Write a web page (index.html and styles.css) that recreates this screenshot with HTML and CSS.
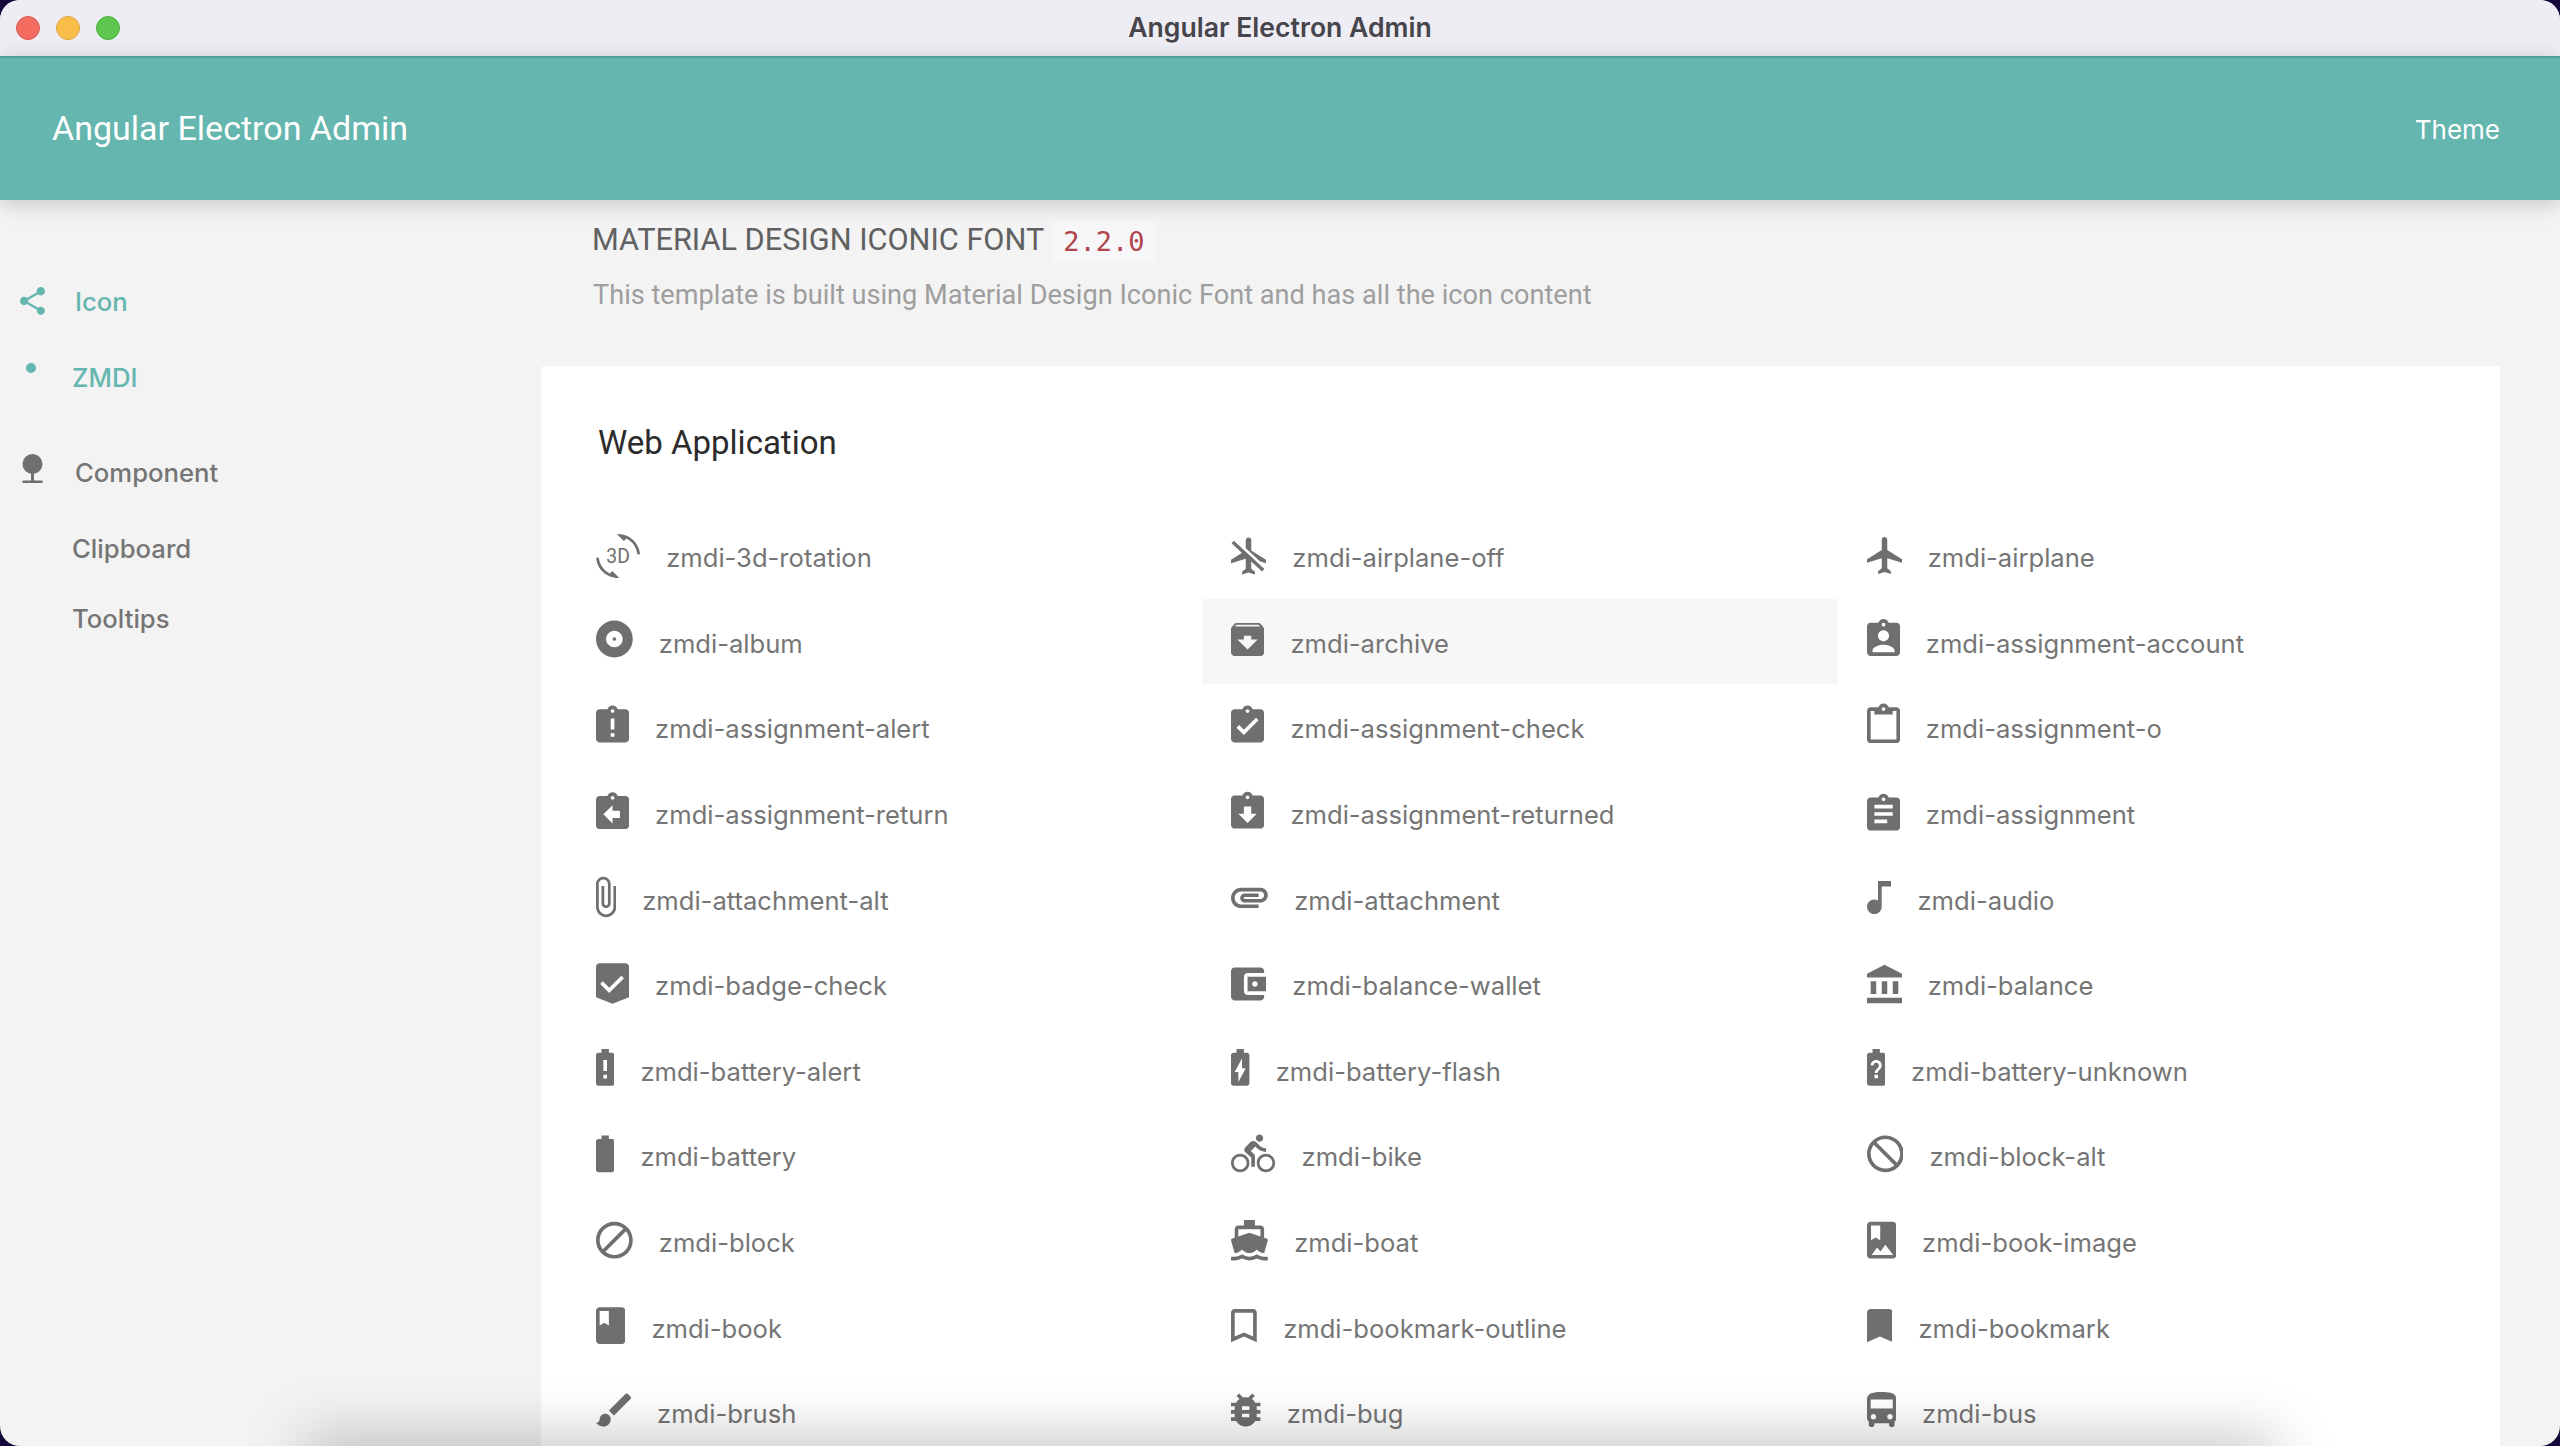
FILE: index.html
```html
<!DOCTYPE html>
<html lang="en">
<head>
    <meta charset="UTF-8">
    <title>Angular Electron Admin</title>
    <link rel="stylesheet" href="styles.css">
</head>
<body>
    <div class="window">
        <div class="titlebar">
            <div class="lights">
                <span class="light red"></span>
                <span class="light yellow"></span>
                <span class="light green"></span>
            </div>
            <div class="window-title">Angular Electron Admin</div>
        </div>

        <header class="topbar">
            <div class="brand">Angular Electron Admin</div>
            <div class="theme">Theme</div>
        </header>

        <div class="layout">
            <nav class="sidebar">
                <div class="nav-item active">
                    <svg class="nav-icon" width="25" height="28" viewBox="3 2 18 20"><path d="M18 16.08c-.76 0-1.44.3-1.96.77L8.91 12.7c.05-.23.09-.46.09-.7s-.04-.47-.09-.7l7.05-4.11c.54.5 1.25.81 2.04.81 1.66 0 3-1.34 3-3s-1.34-3-3-3-3 1.34-3 3c0 .24.04.47.09.7L8.04 9.81C7.5 9.31 6.79 9 6 9c-1.66 0-3 1.34-3 3s1.34 3 3 3c.79 0 1.5-.31 2.04-.81l7.12 4.16c-.05.21-.08.43-.08.65 0 1.61 1.31 2.92 2.92 2.92 1.61 0 2.92-1.31 2.92-2.92s-1.31-2.92-2.92-2.92z"/></svg>
                    <span>Icon</span>
                </div>
                <div class="nav-item active sub-active">
                    <span class="dot"></span>
                    <span>ZMDI</span>
                </div>
                <div class="nav-item group">
                    <svg class="nav-icon" width="25" height="34" viewBox="0 0 25 34"><circle cx="12.5" cy="12" r="10"/><rect x="11" y="20" width="3" height="11"/><rect x="2.5" y="28.5" width="20" height="2.5"/></svg>
                    <span>Component</span>
                </div>
                <div class="sub-item first">Clipboard</div>
                <div class="sub-item">Tooltips</div>
            </nav>

            <main class="content">
                <div class="page-title">
                    <span class="page-name">MATERIAL DESIGN ICONIC FONT</span>
                    <code>2.2.0</code>
                </div>
                <p class="page-desc">This template is built using Material Design Iconic Font and has all the icon content</p>

                <section class="card">
                    <h2>Web Application</h2>
                    <div class="icon-grid">
                        <div class="icon-row"><svg width="44.2" height="48" viewBox="0 -1.04 24 26.09"><path d="M7.52 21.48C4.25 19.94 1.91 16.76 1.55 13H.05C.56 19.16 5.71 24 12 24l.66-.03-3.81-3.81-1.33 1.32zM12 0l-.66.03 3.81 3.81 1.33-1.33c3.27 1.55 5.61 4.72 5.96 8.48h1.5C23.44 4.84 18.29 0 12 0z"/><text class="glyph-text" x="12" y="16" text-anchor="middle">3D</text></svg><span>zmdi-3d-rotation</span></div>
                        <div class="icon-row"><svg width="35" height="48" viewBox="2.5 -1.04 19 26.09"><path d="M21.5 16v-2l-8-5V3.5c0-.83-.67-1.5-1.5-1.5s-1.5.67-1.5 1.5V9l-8 5v2l8-2.5V19l-2 1.5V22l3.5-1 3.5 1v-1.5L13.5 19v-5.5l8 2.5z"/><path class="slash-gap" d="M4.4 3.2l16.6 15.4"/><path class="slash" d="M3.4 4.4L20 19.8"/></svg><span>zmdi-airplane-off</span></div>
                        <div class="icon-row"><svg width="35" height="48" viewBox="2 -.77 19 26.09"><path d="M21 16v-2l-8-5V3.5c0-.83-.67-1.5-1.5-1.5S10 2.67 10 3.5V9l-8 5v2l8-2.5V19l-2 1.5V22l3.5-1 3.5 1v-1.5L13 19v-5.5l8 2.5z"/></svg><span>zmdi-airplane</span></div>

                        <div class="icon-row"><svg width="36.8" height="48" viewBox="2 .05 20 26.09"><path d="M12 2C6.48 2 2 6.48 2 12s4.48 10 10 10 10-4.48 10-10S17.52 2 12 2zm0 14.5c-2.49 0-4.5-2.01-4.5-4.5S9.51 7.5 12 7.5s4.5 2.01 4.5 4.5-2.01 4.5-4.5 4.5zm0-5.5c-.55 0-1 .45-1 1s.45 1 1 1 1-.45 1-1-.45-1-1-1z"/></svg><span>zmdi-album</span></div>
                        <div class="icon-row hover"><svg width="33.1" height="48" viewBox="3 -.22 18 26.09"><path d="M20.54 5.23l-1.39-1.68C18.88 3.21 18.47 3 18 3H6c-.47 0-.88.21-1.16.55L3.46 5.23C3.17 5.57 3 6.02 3 6.5V19c0 1.1.9 2 2 2h14c1.1 0 2-.9 2-2V6.5c0-.48-.17-.93-.46-1.27zM12 17.5L6.5 12H10v-2h4v2h3.5L12 17.5zM5.12 5l.81-1h12l.94 1H5.12z"/></svg><span>zmdi-archive</span></div>
                        <div class="icon-row"><svg width="33.1" height="48" viewBox="3 -.14 18 26.09"><path d="M19 3h-4.18C14.4 1.84 13.3 1 12 1c-1.3 0-2.4.84-2.82 2H5c-1.1 0-2 .9-2 2v14c0 1.1.9 2 2 2h14c1.1 0 2-.9 2-2V5c0-1.1-.9-2-2-2zm-7 0c.55 0 1 .45 1 1s-.45 1-1 1-1-.45-1-1 .45-1 1-1zm0 4c1.66 0 3 1.34 3 3s-1.34 3-3 3-3-1.34-3-3 1.34-3 3-3zm6 12H6v-1c0-2 4-3.1 6-3.1s6 1.1 6 3.1v1z"/></svg><span>zmdi-assignment-account</span></div>

                        <div class="icon-row"><svg width="33.1" height="48" viewBox="3 -.41 18 26.09"><path d="M19 3h-4.18C14.4 1.84 13.3 1 12 1c-1.3 0-2.4.84-2.82 2H5c-1.1 0-2 .9-2 2v14c0 1.1.9 2 2 2h14c1.1 0 2-.9 2-2V5c0-1.1-.9-2-2-2zm-6 15h-2v-2h2v2zm0-4h-2V8h2v6zm-1-9c-.55 0-1-.45-1-1s.45-1 1-1 1 .45 1 1-.45 1-1 1z"/></svg><span>zmdi-assignment-alert</span></div>
                        <div class="icon-row"><svg width="33.1" height="48" viewBox="3 -.41 18 26.09"><path d="M19 3h-4.18C14.4 1.84 13.3 1 12 1c-1.3 0-2.4.84-2.82 2H5c-1.1 0-2 .9-2 2v14c0 1.1.9 2 2 2h14c1.1 0 2-.9 2-2V5c0-1.1-.9-2-2-2zm-7 0c.55 0 1 .45 1 1s-.45 1-1 1-1-.45-1-1 .45-1 1-1zm-2 14l-4-4 1.41-1.41L10 14.17l6.59-6.59L18 9l-8 8z"/></svg><span>zmdi-assignment-check</span></div>
                        <div class="icon-row"><svg width="33.1" height="48" viewBox="3 .72 18 26.09"><path d="M19 3h-4.18C14.4 1.84 13.3 1 12 1s-2.4.84-2.82 2H5c-1.1 0-2 .9-2 2v15.5c0 1.1.9 2 2 2h14c1.1 0 2-.9 2-2V5c0-1.1-.9-2-2-2zm-7 0c.55 0 1 .45 1 1s-.45 1-1 1-1-.45-1-1 .45-1 1-1zm7 17.5H5V5h2v2h10V5h2v15.5z"/></svg><span>zmdi-assignment-o</span></div>

                        <div class="icon-row"><svg width="33.1" height="48" viewBox="3 -.79 18 26.09"><path d="M19 3h-4.18C14.4 1.84 13.3 1 12 1c-1.3 0-2.4.84-2.82 2H5c-1.1 0-2 .9-2 2v14c0 1.1.9 2 2 2h14c1.1 0 2-.9 2-2V5c0-1.1-.9-2-2-2zm-7 0c.55 0 1 .45 1 1s-.45 1-1 1-1-.45-1-1 .45-1 1-1zm4 12h-4v3l-5-5 5-5v3h4v4z"/></svg><span>zmdi-assignment-return</span></div>
                        <div class="icon-row"><svg width="33.1" height="48" viewBox="3 -.52 18 26.09"><path d="M19 3h-4.18C14.4 1.84 13.3 1 12 1c-1.3 0-2.4.84-2.82 2H5c-1.1 0-2 .9-2 2v14c0 1.1.9 2 2 2h14c1.1 0 2-.9 2-2V5c0-1.1-.9-2-2-2zm-7 0c.55 0 1 .45 1 1s-.45 1-1 1-1-.45-1-1 .45-1 1-1zm0 15l-5-5h3V9h4v4h3l-5 5z"/></svg><span>zmdi-assignment-returned</span></div>
                        <div class="icon-row"><svg width="33.1" height="48" viewBox="3 -1.6 18 26.09"><path d="M19 3h-4.18C14.4 1.84 13.3 1 12 1c-1.3 0-2.4.84-2.82 2H5c-1.1 0-2 .9-2 2v14c0 1.1.9 2 2 2h14c1.1 0 2-.9 2-2V5c0-1.1-.9-2-2-2zm-7 0c.55 0 1 .45 1 1s-.45 1-1 1-1-.45-1-1 .45-1 1-1zm2 14H7v-2h7v2zm3-4H7v-2h10v2zm0-4H7V7h10v2z"/></svg><span>zmdi-assignment</span></div>

                        <div class="icon-row"><svg width="20.2" height="48" viewBox="7 -.5 11 26.09"><path d="M16.5 6v11.5c0 2.21-1.79 4-4 4s-4-1.79-4-4V5c0-1.38 1.12-2.5 2.5-2.5s2.5 1.12 2.5 2.5v10.5c0 .55-.45 1-1 1s-1-.45-1-1V6H10v9.5c0 1.38 1.12 2.5 2.5 2.5s2.5-1.12 2.5-2.5V5c0-2.21-1.79-4-4-4S7 2.79 7 5v12.5c0 3.04 2.46 5.5 5.5 5.5s5.5-2.46 5.5-5.5V6h-1.5z"/></svg><span>zmdi-attachment-alt</span></div>
                        <div class="icon-row"><svg width="36.8" height="48" viewBox="2 -.54 20 26.09"><path d="M2 12.5C2 9.46 4.46 7 7.5 7H18c2.21 0 4 1.79 4 4s-1.79 4-4 4H9.5C8.12 15 7 13.88 7 12.5S8.12 10 9.5 10H17v2H9.41c-.55 0-.55 1 0 1H18c1.1 0 2-.9 2-2s-.9-2-2-2H7.5C5.57 9 4 10.57 4 12.5S5.57 16 7.5 16H17v2H7.5C4.46 18 2 15.54 2 12.5z"/></svg><span>zmdi-attachment</span></div>
                        <div class="icon-row"><svg width="24.8" height="48" viewBox="6 -.82 13.5 26.09"><path d="M12 3v10.55c-.59-.34-1.27-.55-2-.55-2.21 0-4 1.79-4 4s1.79 4 4 4 4-1.79 4-4V6h5.5V3H12z"/></svg><span>zmdi-audio</span></div>

                        <div class="icon-row"><svg width="33.1" height="48" viewBox="3 -.77 18 26.09"><path d="M3 3c0-1.1.9-2 2-2h14c1.1 0 2 .9 2 2v16.5L12 23l-9-3.5z"/><path class="cut" d="M6 11.5l4.2 4.2 7.3-7.2"/></svg><span>zmdi-badge-check</span></div>
                        <div class="icon-row"><svg width="35" height="48" viewBox="3 -1.04 19 26.09"><path d="M21 18v1c0 1.1-.89 2-2 2H5c-1.11 0-2-.9-2-2V5c0-1.1.89-2 2-2h14c1.11 0 2 .9 2 2v1h-9c-1.11 0-2 .9-2 2v8c0 1.1.89 2 2 2h9zm-9-2h10V8H12v8zm4-2.5c-.83 0-1.5-.67-1.5-1.5s.67-1.5 1.5-1.5 1.5.67 1.5 1.5-.67 1.5-1.5 1.5z"/></svg><span>zmdi-balance-wallet</span></div>
                        <div class="icon-row"><svg width="35" height="48" viewBox="2 -1.54 19 26.09"><path d="M4 10v7h3v-7H4zm6 0v7h3v-7h-3zM2 22h19v-3H2v3zm14-12v7h3v-7h-3zm-4.5-9L2 6v2h19V6l-9.5-5z"/></svg><span>zmdi-balance</span></div>

                        <div class="icon-row"><svg width="18.4" height="48" viewBox="7 -.17 10 26.09"><path d="M15.67 4H14V2h-4v2H8.33C7.6 4 7 4.6 7 5.33v15.33C7 21.4 7.6 22 8.33 22h7.33c.74 0 1.34-.6 1.34-1.33V5.33C17 4.6 16.4 4 15.67 4zM13 18h-2v-2h2v2zm0-4h-2V8h2v6z"/></svg><span>zmdi-battery-alert</span></div>
                        <div class="icon-row"><svg width="18.4" height="48" viewBox="7 -.17 10 26.09"><path d="M15.67 4H14V2h-4v2H8.33C7.6 4 7 4.6 7 5.33v15.33C7 21.4 7.6 22 8.33 22h7.33c.74 0 1.34-.6 1.34-1.33V5.33C17 4.6 16.4 4 15.67 4zM11 20v-5.5H9L13 7v5.5h2L11 20z"/></svg><span>zmdi-battery-flash</span></div>
                        <div class="icon-row"><svg width="18.4" height="48" viewBox="7 -.17 10 26.09"><path d="M15.67 4H14V2h-4v2H8.33C7.6 4 7 4.6 7 5.33v15.33C7 21.4 7.6 22 8.33 22h7.33c.74 0 1.34-.6 1.34-1.33V5.33C17 4.6 16.4 4 15.67 4zm-2.72 13.95h-1.9v-1.9h1.9v1.9zm1.35-5.26s-.38.42-.67.71c-.48.48-.83 1.15-.83 1.6h-1.6c0-.83.46-1.52.93-2l.93-.94c.27-.27.44-.65.44-1.06 0-.83-.67-1.5-1.5-1.5s-1.5.67-1.5 1.5H9c0-1.66 1.34-3 3-3s3 1.34 3 3c0 .66-.27 1.26-.7 1.69z"/></svg><span>zmdi-battery-unknown</span></div>

                        <div class="icon-row"><svg width="18.4" height="48" viewBox="7 -.39 10 26.09"><path d="M15.67 4H14V2h-4v2H8.33C7.6 4 7 4.6 7 5.33v15.33C7 21.4 7.6 22 8.33 22h7.33c.74 0 1.34-.6 1.34-1.33V5.33C17 4.6 16.4 4 15.67 4z"/></svg><span>zmdi-battery</span></div>
                        <div class="icon-row"><svg width="44.2" height="48" viewBox="0 -.37 24 26.09"><path d="M15.5 5.5c1.1 0 2-.9 2-2s-.9-2-2-2-2 .9-2 2 .9 2 2 2zM5 12c-2.8 0-5 2.2-5 5s2.2 5 5 5 5-2.2 5-5-2.2-5-5-5zm0 8.5c-1.9 0-3.5-1.6-3.5-3.5s1.6-3.5 3.5-3.5 3.5 1.6 3.5 3.5-1.6 3.5-3.5 3.5zm5.8-10l2.4-2.4.8.8c1.3 1.3 3 2.1 5.1 2.1V9c-1.5 0-2.7-.6-3.6-1.5l-1.9-1.9c-.5-.4-1-.6-1.6-.6s-1.1.2-1.4.6L7.8 8.4c-.4.4-.6.9-.6 1.4 0 .6.2 1.1.6 1.4L11 14v5h2v-6.2l-2.2-2.3zM19 12c-2.8 0-5 2.2-5 5s2.2 5 5 5 5-2.2 5-5-2.2-5-5-5zm0 8.5c-1.9 0-3.5-1.6-3.5-3.5s1.6-3.5 3.5-3.5 3.5 1.6 3.5 3.5-1.6 3.5-3.5 3.5z"/></svg><span>zmdi-bike</span></div>
                        <div class="icon-row"><svg width="36.8" height="48" viewBox="2 -.39 20 26.09"><path transform="matrix(-1 0 0 1 24 0)" d="M12 2C6.48 2 2 6.48 2 12s4.48 10 10 10 10-4.48 10-10S17.52 2 12 2zM4 12c0-4.42 3.58-8 8-8 1.85 0 3.55.63 4.9 1.69L5.69 16.9C4.63 15.55 4 13.85 4 12zm8 8c-1.85 0-3.55-.63-4.9-1.69L18.31 7.1C19.37 8.45 20 10.15 20 12c0 4.42-3.58 8-8 8z"/></svg><span>zmdi-block-alt</span></div>

                        <div class="icon-row"><svg width="36.8" height="48" viewBox="2 -.6 20 26.09"><path d="M12 2C6.48 2 2 6.48 2 12s4.48 10 10 10 10-4.48 10-10S17.52 2 12 2zM4 12c0-4.42 3.58-8 8-8 1.85 0 3.55.63 4.9 1.69L5.69 16.9C4.63 15.55 4 13.85 4 12zm8 8c-1.85 0-3.55-.63-4.9-1.69L18.31 7.1C19.37 8.45 20 10.15 20 12c0 4.42-3.58 8-8 8z"/></svg><span>zmdi-block</span></div>
                        <div class="icon-row"><svg width="36.8" height="48" viewBox="2 -.6 20 26.09"><path d="M20 21c-1.39 0-2.78-.47-4-1.32-2.44 1.71-5.56 1.71-8 0C6.78 20.53 5.39 21 4 21H2v2h2c1.38 0 2.74-.35 4-.99 2.52 1.29 5.48 1.29 8 0 1.26.65 2.62.99 4 .99h2v-2h-2zM3.95 19H4c1.6 0 3.02-.88 4-2 .98 1.12 2.4 2 4 2s3.02-.88 4-2c.98 1.12 2.4 2 4 2h.05l1.89-6.68c.08-.26.06-.54-.06-.78s-.34-.42-.6-.5L20 10.62V6c0-1.1-.9-2-2-2h-3V1H9v3H6c-1.1 0-2 .9-2 2v4.62l-1.29.42c-.26.08-.48.26-.6.5s-.15.52-.06.78L3.95 19zM6 6h12v3.97L12 8 6 9.97V6z"/></svg><span>zmdi-boat</span></div>
                        <div class="icon-row"><svg width="29.4" height="48" viewBox="4 -.6 16 26.09"><path fill-rule="evenodd" d="M18 2H6c-1.1 0-2 .9-2 2v16c0 1.1.9 2 2 2h12c1.1 0 2-.9 2-2V4c0-1.1-.9-2-2-2zM6.2 4h5v8l-2.5-1.5L6.2 12V4zM6.5 20l3-4 1.8 2.2 2.7-3.7 4.2 5.5z"/></svg><span>zmdi-book-image</span></div>

                        <div class="icon-row"><svg width="29.4" height="48" viewBox="4 -.82 16 26.09"><path d="M18 2H6c-1.1 0-2 .9-2 2v16c0 1.1.9 2 2 2h12c1.1 0 2-.9 2-2V4c0-1.1-.9-2-2-2zM6 4h5v8l-2.5-1.5L6 12V4z"/></svg><span>zmdi-book</span></div>
                        <div class="icon-row"><svg width="25.8" height="48" viewBox="5 -.82 14 26.09"><path d="M17 3H7c-1.1 0-2 .9-2 2v16l7-3 7 3V5c0-1.1-.9-2-2-2zm0 15l-5-2.18L7 18V5h10v13z"/></svg><span>zmdi-bookmark-outline</span></div>
                        <div class="icon-row"><svg width="25.8" height="48" viewBox="5 -.82 14 26.09"><path d="M17 3H7c-1.1 0-2 .9-2 2v16l7-3 7 3V5c0-1.1-.9-2-2-2z"/></svg><span>zmdi-bookmark</span></div>

                        <div class="icon-row"><svg width="35" height="48" viewBox="2 .05 19 26.09"><path d="M7 14c-1.66 0-3 1.34-3 3 0 1.31-1.16 2-2 2 .92 1.22 2.49 2 4 2 2.21 0 4-1.79 4-4 0-1.66-1.34-3-3-3zm13.71-9.37l-1.34-1.34c-.39-.39-1.02-.39-1.41 0L9 12.25 11.75 15l8.96-8.96c.39-.39.39-1.02 0-1.41z"/></svg><span>zmdi-brush</span></div>
                        <div class="icon-row"><svg width="29.4" height="48" viewBox="4 .05 16 26.09"><path d="M20 8h-2.81c-.45-.78-1.07-1.45-1.82-1.96L17 4.41 15.59 3l-2.17 2.17C12.96 5.06 12.49 5 12 5c-.49 0-.96.06-1.41.17L8.41 3 7 4.41l1.62 1.63C7.88 6.55 7.26 7.22 6.81 8H4v2h2.09c-.05.33-.09.66-.09 1v1H4v2h2v1c0 .34.04.67.09 1H4v2h2.81c1.04 1.79 2.97 3 5.19 3s4.15-1.21 5.19-3H20v-2h-2.09c.05-.33.09-.66.09-1v-1h2v-2h-2v-1c0-.34-.04-.67-.09-1H20V8zm-6 8h-4v-2h4v2zm0-4h-4v-2h4v2z"/></svg><span>zmdi-bug</span></div>
                        <div class="icon-row"><svg width="29.4" height="48" viewBox="4 -.18 16 26.09"><path d="M4 16c0 .88.39 1.67 1 2.22V20c0 .55.45 1 1 1h1c.55 0 1-.45 1-1v-1h8v1c0 .55.45 1 1 1h1c.55 0 1-.45 1-1v-1.78c.61-.55 1-1.34 1-2.22V6c0-3.5-3.58-4-8-4s-8 .5-8 4v10zm3.5 1c-.83 0-1.5-.67-1.5-1.5S6.67 14 7.5 14s1.5.67 1.5 1.5S8.33 17 7.5 17zm9 0c-.83 0-1.5-.67-1.5-1.5s.67-1.5 1.5-1.5 1.5.67 1.5 1.5-.67 1.5-1.5 1.5zm1.5-6H6V6h12v5z"/></svg><span>zmdi-bus</span></div>
                    </div>
                </section>
            </main>
        </div>

        <div class="dock-shadow"></div>
    </div>
</body>
</html>
```

FILE: styles.css
```css
html, body {
    margin: 0;
    padding: 0;
    height: 100%;
    background: #14093a;
    overflow: hidden;
}

body {
    font-family: 'Inter', 'Roboto', sans-serif;
    color: #757575;
}

.window {
    position: relative;
    height: 1446px;
    border-radius: 20px;
    overflow: hidden;
    background: #f3f3f3;
}

/* mac title bar */
.titlebar {
    height: 56px;
    background: #efedf4;
    display: flex;
    align-items: center;
    justify-content: center;
    position: relative;
}

.lights {
    position: absolute;
    left: 16px;
    top: 16px;
    display: flex;
    gap: 16px;
}

.light {
    width: 24px;
    height: 24px;
    border-radius: 50%;
    box-sizing: border-box;
}

.red { background: #f46b60; border: 1px solid #de5a50; }
.yellow { background: #f8bd4b; border: 1px solid #e0a33a; }
.green { background: #5fc750; border: 1px solid #4bae3e; }

.window-title {
    font-size: 26.6px;
    font-weight: 600;
    color: #46454c;
    padding-bottom: 3px;
}

/* app header */
.topbar {
    height: 144px;
    box-sizing: border-box;
    background: #64b6af;
    border-top: 2px solid #549d97;
    display: flex;
    align-items: center;
    justify-content: space-between;
    padding: 0 60px 0 52px;
    color: #fff;
    box-shadow: 0 4px 20px rgba(0, 0, 0, 0.18);
    position: relative;
    z-index: 2;
}

.brand {
    font-family: 'Roboto', sans-serif;
    font-size: 34px;
    padding-bottom: 3px;
}

.theme {
    font-size: 26px;
}

.layout {
    display: flex;
    height: 1246px;
}

/* left menu */
.sidebar {
    width: 541px;
    flex: none;
    padding-top: 63px;
    box-sizing: border-box;
    font-size: 25.7px;
    font-weight: 500;
    color: #757575;
}

.nav-item {
    height: 76px;
    display: flex;
    align-items: center;
    padding-left: 20px;
    gap: 30px;
}

.nav-item.active {
    color: #64b6af;
}

.nav-icon {
    fill: currentColor;
    flex: none;
}

.group .nav-icon {
    fill: #6f6f6f;
    margin-top: -6px;
}

.group {
    margin-top: 19px;
}

.sub-active {
    padding-left: 26px;
    gap: 36px;
}

.dot {
    width: 10px;
    height: 10px;
    border-radius: 50%;
    background: #64b6af;
    align-self: flex-start;
    margin-top: 24px;
}

.sub-item {
    height: 70px;
    line-height: 70px;
    padding-left: 72px;
}

.sub-item.first {
    margin-top: 4px;
}

/* main content */
.content {
    flex: 1;
    min-width: 0;
    padding: 20px 60px 0 0;
}

.page-title {
    height: 42px;
    display: flex;
    align-items: center;
    gap: 8px;
    padding-left: 51px;
    font-family: 'Roboto', sans-serif;
    font-size: 30.7px;
    color: #616161;
}

.page-name {
    padding-bottom: 3px;
}

.page-title code {
    font-family: 'DejaVu Sans Mono', monospace;
    font-size: 27px;
    color: #b0454d;
    background: #f7f7f9;
    border-radius: 4px;
    padding: 5px 11px;
}

.page-desc {
    margin: 15px 0 53px;
    padding-left: 52px;
    line-height: 36px;
    font-family: 'Roboto', sans-serif;
    font-size: 27.15px;
    color: #9e9e9e;
}

.card {
    background: #fff;
    border-radius: 4px;
    padding: 57px 27px 40px 26px;
}

.card h2 {
    margin: 0 0 50px 31px;
    font-family: 'Roboto', sans-serif;
    font-size: 33px;
    line-height: 40px;
    font-weight: 400;
    color: #2b2b2b;
}

.icon-grid {
    display: grid;
    grid-template-columns: repeat(3, 1fr);
    grid-auto-rows: 85.6px;
}

.icon-row {
    display: flex;
    align-items: center;
    gap: 26px;
    padding-left: 29px;
    font-size: 25.6px;
}

.icon-row svg {
    flex: none;
    fill: #6f6f6f;
}

.icon-row span {
    padding-top: 4px;
}

.icon-row.hover {
    background: #f7f7f7;
}

.glyph-text {
    font-family: 'Roboto', sans-serif;
    font-size: 10.5px;
}

.cut {
    fill: none;
    stroke: #fff;
    stroke-width: 2;
}

.slash {
    fill: none;
    stroke: #6f6f6f;
    stroke-width: 1.9;
}

.slash-gap {
    fill: none;
    stroke: #fff;
    stroke-width: 1.6;
}

/* shadow of the dock that sits under the window */
.dock-shadow {
    position: absolute;
    left: 312px;
    right: 292px;
    top: 1446px;
    height: 40px;
    box-shadow: 0 0 60px 7px rgba(0, 0, 0, 0.25);
    pointer-events: none;
    z-index: 3;
}
```
